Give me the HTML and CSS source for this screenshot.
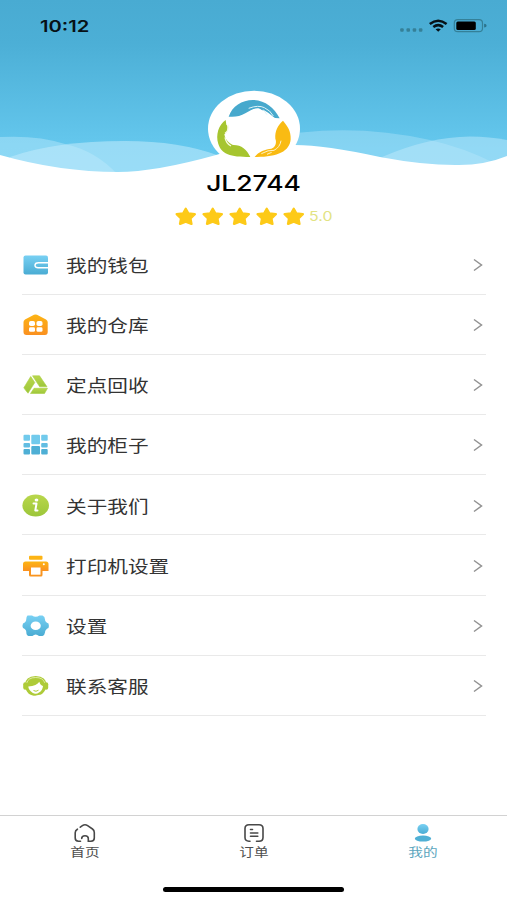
FILE: index.html
```html
<!DOCTYPE html>
<html lang="zh-CN">
<head>
<meta charset="utf-8">
<title>我的</title>
<link rel="stylesheet" href="styles.css">
</head>
<body>
<svg class="defs" aria-hidden="true">
  <defs>
    <linearGradient id="sky" x2="0" y2="1"><stop offset="0" stop-color="#49abd2"/><stop offset=".25" stop-color="#4cafd6"/><stop offset=".85" stop-color="#65c8ee"/><stop offset="1" stop-color="#67cbf1"/></linearGradient>
    <linearGradient id="blue" x2="0" y2="1"><stop offset="0" stop-color="#78d0f3"/><stop offset="1" stop-color="#4aacd3"/></linearGradient>
    <linearGradient id="orange" x2="0" y2="1"><stop offset="0" stop-color="#fdb514"/><stop offset="1" stop-color="#fa9020"/></linearGradient>
    <linearGradient id="green" x2="0" y2="1"><stop offset="0" stop-color="#b9d74c"/><stop offset="1" stop-color="#9cc63a"/></linearGradient>
    <symbol id="star" viewBox="0 0 64 56"><path d="M32 5 40 19 59 21 46 34 49 50 32 43 15 50 18 34 5 21 24 19Z" fill="#fdca18" stroke="#fdca18" stroke-width="7" stroke-linejoin="round"/></symbol>
    <symbol id="chevron" viewBox="0 0 10 14"><path d="M1 1.500 8.500 7 1 12.500" fill="none" stroke="#929292" stroke-width="1.500"/></symbol>
  </defs>
</svg>
<main class="screen">
  <header class="hero">
    <svg class="waves" viewBox="0 0 507 180">
      <rect width="507" height="174" fill="url(#sky)"/>
      <path d="M0 137Q38 135 65 144Q96 151 117 174H0Z" fill="#b7e7fa" opacity=".48"/>
      <path d="M10 157Q55 141 125 141Q180 141 220 156V174H10Z" fill="#c0eafb" opacity=".57"/>
      <path d="M260 139Q345 121 430 140Q465 148 494 163L440 170 260 150Z" fill="#b7e7fa" opacity=".4"/>
      <path d="M382 157Q428 137 470 136.500Q490 136.500 507 140V170H420Z" fill="#c0eafb" opacity=".5"/>
      <path d="M0 155Q60 172 118 172Q155 172 216 155Q250 144 295 145Q325 145 380 157Q425 165.500 459 165Q485 165 507 156V180H0Z" fill="#fff"/>
    </svg>
    <div class="status">
      <span class="clock">10:12</span>
      <svg class="indicators" viewBox="0 0 110 30">
        <g fill="#358098"><rect x="10.200" y="18.200" width="3.500" height="3.500" rx="1"/><rect x="16.500" y="18.200" width="3.500" height="3.500" rx="1"/><rect x="22.700" y="18.200" width="3.500" height="3.500" rx="1"/><rect x="28.900" y="18.200" width="3.500" height="3.500" rx="1"/></g>
        <path d="M39.800 14Q48.200 7.500 56.600 14M43.300 17.100Q48.200 13.200 53.100 17.100" fill="none" stroke="#071116" stroke-width="2.500"/>
        <path d="M45.600 19.300Q48.200 17.600 50.800 19.300L48.200 21.800Z" fill="#071116"/>
        <rect x="64.300" y="9.700" width="28.200" height="12" rx="3.500" fill="none" stroke="#348098" stroke-width="1.200"/>
        <rect x="66.300" y="11.500" width="19.500" height="8.600" rx="1.500"/>
        <path d="M94.100 13.800Q96.600 14 96.600 15.700Q96.600 17.400 94.100 17.600Z" fill="#2c748d"/>
      </svg>
    </div>
    <svg class="avatar" viewBox="0 0 360 270">
      <ellipse cx="177" cy="146" rx="138" ry="114" fill="#fff"/>
      <path d="M101 110C112 78 140 61 174 60C210 61 237 82 254 115L240 114C226 105 216 92 200 90C188 79 169 88 151 100C136 109 119 112 101 110Z" fill="#47a9cd"/>
      <path d="M161 85Q190 74 208 83Q226 91 235 108M205 89L216 104" fill="none" stroke="#dff3f7" stroke-width="3"/>
      <path d="M92 120C71 134 61 165 70 192C80 222 104 231 166 231C156 209 139 195 116 195C106 193 96 184 90 171L88 163C99 154 101 139 94 134Z" fill="#a6c52f"/>
      <path d="M99 134Q102 153 90 160M90 172Q93 190 108 198" fill="none" stroke="#f7fbdf" stroke-width="4"/>
      <path d="M264 122C277 139 288 151 287 178C284 215 247 232 179 231C190 215 212 207 229 206C241 202 246 188 241 176C239 154 248 136 264 122Z" fill="#f9bb13"/>
      <path d="M199 221Q220 209 237 211Q255 202 258 182M216 223L230 217" fill="none" stroke="#fff3c8" stroke-width="3"/>
    </svg>
  </header>
  <section class="profile">
    <h1 class="name"><span>JL2744</span></h1>
    <div class="rating">
      <svg class="star"><use href="#star"/></svg><svg class="star"><use href="#star"/></svg><svg class="star"><use href="#star"/></svg><svg class="star"><use href="#star"/></svg><svg class="star"><use href="#star"/></svg>
      <span class="score">5.0</span>
    </div>
  </section>
  <nav class="menu">
    <a class="row"><svg class="icon" viewBox="0 0 28 24"><rect x="1.500" y="2.500" width="24.500" height="19" rx="2" fill="url(#blue)"/><path d="M26.500 9.700H16.500Q13 9.700 13 12.300T16.500 14.700H26.500" fill="none" stroke="#fff" stroke-width="1.500"/></svg><span class="label">我的钱包</span><svg class="chevron"><use href="#chevron"/></svg></a>
    <a class="row"><svg class="icon" viewBox="0 0 28 24"><path d="M12 1.800Q13.500 1 15 1.800L24 6.500Q25.700 7.500 25.700 9V19Q25.700 22 23 22H4.500Q1.500 22 1.500 19V9Q1.500 7.500 3 6.500Z" fill="url(#orange)"/><g fill="#fff"><rect x="7" y="8" width="6" height="5" rx="1.800"/><rect x="14.500" y="8" width="6" height="5" rx="1.800"/><rect x="7" y="14.300" width="6" height="4.500" rx="1.400"/><rect x="14.500" y="14.300" width="6" height="4.500" rx="1.400"/></g></svg><span class="label">我的仓库</span><svg class="chevron"><use href="#chevron"/></svg></a>
    <a class="row"><svg class="icon" viewBox="0 0 28 24"><g fill="url(#green)" stroke="#a9ce42" stroke-width=".6" stroke-linejoin="round"><path d="M8.700 3.500 12.800 9.500 6 20.200Q4 18 1.800 14.800Z"/><path d="M10.500 2.800H17.500L25 13.800H17.700Z"/><path d="M12 15.300H25.500L22.500 20.500H8.500Z"/></g></svg><span class="label">定点回收</span><svg class="chevron"><use href="#chevron"/></svg></a>
    <a class="row"><svg class="icon" viewBox="0 0 28 24"><g fill="#71caec"><rect x="1.500" y="1.800" width="6.500" height="6" rx="1"/><rect x="9.300" y="1.800" width="8.700" height="9.500" rx="1"/><rect x="19.200" y="1.800" width="6.500" height="6" rx="1"/></g><g fill="#62bde2"><rect x="1.500" y="10" width="6.500" height="4.500" rx="1"/><rect x="19.200" y="10" width="6.500" height="4.500" rx="1"/></g><g fill="#4eafd5"><rect x="1.500" y="16" width="6.500" height="5.500" rx="1"/><rect x="9.300" y="13" width="8.700" height="8.500" rx="1"/><rect x="19.200" y="16" width="6.500" height="5.500" rx="1"/></g></svg><span class="label">我的柜子</span><svg class="chevron"><use href="#chevron"/></svg></a>
    <a class="row"><svg class="icon" viewBox="0 0 28 24"><ellipse cx="13.700" cy="11.500" rx="13.300" ry="11" fill="url(#green)"/><ellipse cx="14.500" cy="6" rx="1.900" ry="1.500" fill="#fff"/><path d="M11.500 9.500H14.500L13.300 16.500H15.500" fill="none" stroke="#fff" stroke-width="2" stroke-linecap="round" stroke-linejoin="round"/></svg><span class="label">关于我们</span><svg class="chevron"><use href="#chevron"/></svg></a>
    <a class="row"><svg class="icon" viewBox="0 0 28 24"><rect x="7" y="1.800" width="13.500" height="4" rx="1" fill="#fdb414"/><path d="M3.500 7.500H24Q26.500 7.500 26.500 10V17H1V10Q1 7.500 3.500 7.500Z" fill="url(#orange)"/><rect x="7" y="14" width="13.500" height="8.500" rx="1.500" fill="#f99520"/><rect x="9" y="13.500" width="9.500" height="7.200" fill="#fff"/><circle cx="21.800" cy="10.300" r="1" fill="#fff"/></svg><span class="label">打印机设置</span><svg class="chevron"><use href="#chevron"/></svg></a>
    <a class="row"><svg class="icon" viewBox="0 0 28 24"><path d="M5.500 1.500H10Q13.700 4 17.400 1.500H20.500Q23 2.500 23 5.500Q23 8 26.500 9.500Q27.300 12 26.500 14Q23 15.500 23 18.500Q22.500 21.500 20.500 22H17Q13.700 19 10.400 22H6.500Q4.300 21.500 4.300 18Q4.300 15.500 1 14Q0 11.500 1 9.500Q4.300 8 4.300 5Q4.300 2.500 5.500 1.500Z" fill="url(#blue)"/><ellipse cx="13.700" cy="11.800" rx="5.100" ry="4.300" fill="#fff"/></svg><span class="label">设置</span><svg class="chevron"><use href="#chevron"/></svg></a>
    <a class="row"><svg class="icon" viewBox="0 0 28 24"><path d="M3 11Q3 2.300 13.700 2Q24.400 2.300 24.400 11Q24.400 16 20 20Q13.500 24 7 20Q3 16 3 11Z" fill="#aecb38"/><path d="M6.300 12.500Q15 12 17.300 7.800Q18.500 11.500 21 12Q20.500 16.800 17 18.500Q14 20.800 10.500 18.800Q6.500 16 6.300 12.500Z" fill="#fff"/><path d="M4.500 9.500Q6 3.500 13.700 3.500Q21 3.500 22.900 9" fill="none" stroke="#e9f3bc" stroke-width=".8"/><rect x="1.200" y="8.300" width="4" height="7.500" rx="2" fill="#aecb38"/><rect x="22.200" y="8.300" width="4" height="7.500" rx="2" fill="#aecb38"/><path d="M11.500 16.500Q14 18.200 16.500 16.200" fill="none" stroke="#aecb38" stroke-width="1"/><path d="M5 20Q9 24.500 18 21.500" fill="none" stroke="#fff" stroke-width="1.400"/></svg><span class="label">联系客服</span><svg class="chevron"><use href="#chevron"/></svg></a>
  </nav>
  <footer class="tabs">
    <a class="tab"><svg viewBox="0 0 24 20"><path d="M7.500 18.200H5.500Q2.200 18.200 2.200 15V9.800Q2.200 7.500 4.400 6.200M7.300 4.200 9.400 2.700Q12 .9 14.600 2.700L19.500 6Q21.300 7.300 21.300 9.500V15Q21.300 18.200 18 18.200H15.300V15.500Q15.300 12.700 12 12.700T8.700 15.500" fill="none" stroke="#484848" stroke-width="1.600" stroke-linecap="round"/></svg><span>首页</span></a>
    <a class="tab"><svg viewBox="0 0 24 20"><path d="M8 18.200H7Q3 18.200 3 14.500V5.500Q3 1.800 7 1.800H17Q21 1.800 21 5.500V14.500Q21 18.200 17 18.200H14.500M8.500 6.500H10.500M8.500 10H15.800M8.500 13.300H15.800" fill="none" stroke="#484848" stroke-width="1.600" stroke-linecap="round"/></svg><span>订单</span></a>
    <a class="tab active"><svg viewBox="0 0 24 20"><ellipse cx="12" cy="6" rx="5.600" ry="4.900" fill="url(#blue)"/><ellipse cx="12" cy="15.600" rx="8.200" ry="3" fill="#4fb0d5"/></svg><span>我的</span></a>
  </footer>
  <div class="home-indicator"></div>
</main>
</body>
</html>
```
FILE: styles.css
```css
* { box-sizing: border-box; }
body { margin: 0; background: #fff; font-family: Inter, "Noto Sans CJK SC", sans-serif; }
svg { display: block; flex: none; }
.defs { position: absolute; width: 0; height: 0; }
.screen { width: 507px; height: 900px; display: flex; flex-direction: column; overflow: hidden; }
.hero { position: relative; height: 170px; flex: none; }
.waves { position: absolute; top: 0; left: 0; width: 507px; height: 180px; }
.status { position: relative; height: 80px; padding: 10px 7px 0 39.500px; display: flex; justify-content: space-between; align-items: flex-start; }
.clock { font-size: 16px; line-height: 32px; font-weight: 600; color: #071116; transform: scaleX(1.26); transform-origin: left; }
.indicators { width: 110px; height: 30px; }
.avatar { position: relative; width: 120px; height: 90px; margin-left: 195px; }
.profile { position: relative; height: 64.500px; flex: none; text-align: center; }
.name { margin: 0; height: 27px; line-height: 27px; font-size: 21.500px; font-weight: 500; color: #000; }
.name span { display: inline-block; transform: scaleX(1.23); }
.rating { display: flex; align-items: center; gap: 5.400px; margin: 8.500px 0 0 175px; height: 22px; }
.star { width: 21.500px; height: 19px; }
.score { font-size: 12.5px; color: #e2e383; transform: scaleX(1.27); transform-origin: left; }
.menu { margin: 0 21px 0 22px; }
.row { height: 60.200px; padding-top: 1.500px; display: flex; align-items: center; border-bottom: 1px solid #e9e9e9; }
.icon { width: 28px; height: 24px; margin-right: 16px; }
.label { font-size: 17.2px; line-height: 28px; color: #333; white-space: nowrap; transform: scaleX(1.2); transform-origin: left; font-family: "Noto Sans CJK SC", sans-serif; }
.chevron { width: 10px; height: 14px; margin: 0 3.500px 0 auto; }
.tabs { margin-top: auto; height: 70px; flex: none; display: grid; grid-template-columns: repeat(3, 1fr); border-top: 1.500px solid #d2d2d2; }
.tab { display: flex; flex-direction: column; align-items: center; padding-top: 7px; color: #4d4d4d; }
.tab svg { width: 24px; height: 20px; margin-left: 1px; }
.tab span { font: 12px/17px "Noto Sans CJK SC", sans-serif; transform: scaleX(1.22); margin-left: 1px; }
.active { color: #5ba5bd; }
.home-indicator { width: 181px; height: 5px; border-radius: 3px; margin: 2px auto 8px; background: #000; flex: none; }
```
